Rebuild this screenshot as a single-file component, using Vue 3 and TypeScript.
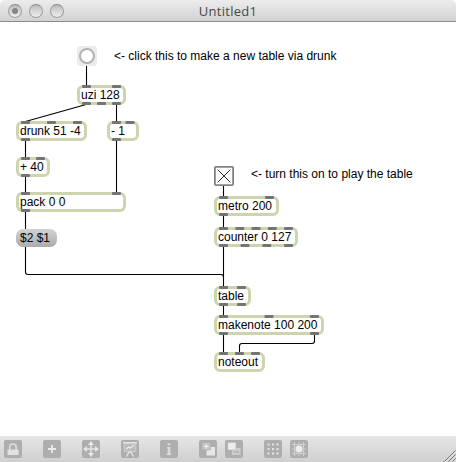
<script setup lang="ts">
interface PatchObject {
  id: string
  text: string
  x: number
  y: number
  w: number
  inlets: number[]
  outlets: number[]
}

// Port positions are offsets from the object's left edge.
const objects: PatchObject[] = [
  { id: 'uzi', text: 'uzi 128', x: 77, y: 85, w: 49, inlets: [5, 35], outlets: [5, 20, 35] },
  { id: 'drunk', text: 'drunk 51 -4', x: 16, y: 121, w: 71, inlets: [5, 31, 57], outlets: [5] },
  { id: 'minus', text: '- 1', x: 107, y: 121, w: 32, inlets: [5, 18.5], outlets: [5] },
  { id: 'plus', text: '+ 40', x: 16, y: 157, w: 34, inlets: [5, 20], outlets: [5] },
  { id: 'pack', text: 'pack 0 0', x: 16, y: 192, w: 110, inlets: [5, 96], outlets: [5] },
  { id: 'metro', text: 'metro 200', x: 214, y: 196, w: 65, inlets: [5, 51], outlets: [5] },
  { id: 'counter', text: 'counter 0 127', x: 214, y: 227, w: 84, inlets: [5, 21.3, 37.5, 53.8, 70], outlets: [5, 26.5, 48.3, 70] },
  { id: 'table', text: 'table', x: 214, y: 286, w: 37, inlets: [5, 23], outlets: [5, 23] },
  { id: 'makenote', text: 'makenote 100 200', x: 214, y: 315, w: 110, inlets: [5, 50.5, 96], outlets: [5, 96] },
  { id: 'noteout', text: 'noteout', x: 214, y: 352, w: 51, inlets: [5, 21, 37], outlets: [] },
]

const cords: string[] = [
  'M86.5 66V86',
  'M87 104.3L25.5 121.5',
  'M116.5 104V122',
  'M25.5 140V158',
  'M25.5 176V193',
  'M116.5 140V193',
  'M25.5 211V229',
  'M25.5 247V272Q25.5 274.5 28 274.5H221Q223.5 274.5 223.5 277',
  'M223.5 186V197',
  'M223.5 215V228',
  'M223.5 246V287',
  'M223.5 305V316',
  'M223.5 334V353',
  'M314.5 334V341Q314.5 343.5 312 343.5H242Q239.5 343.5 239.5 346V353',
]

const gridDots = [4.5, 9, 13.5]
const px = (n: number): string => `${n}px`
</script>

<template>
  <div class="window">
    <header class="titlebar">
      <div class="lights"><i class="light dirty"></i><i class="light"></i><i class="light"></i></div>
      <span class="title">Untitled1</span>
    </header>

    <main class="canvas">
      <div class="bang"><i></i></div>
      <div class="comment first">&lt;- click this to make a new table via drunk</div>
      <div class="comment second">&lt;- turn this on to play the table</div>
      <svg class="toggle" viewBox="0 0 20 20">
        <rect x=".9" y=".9" width="18.2" height="18.2" rx="1.2" fill="#fff" stroke="#828282" stroke-width="1.8" />
        <path d="M3.7 3.7L16.3 16.3M16.3 3.7L3.7 16.3" stroke="#111" stroke-width=".9" />
      </svg>
      <div
        v-for="o in objects"
        :key="o.id"
        class="object"
        :style="{ left: px(o.x), top: px(o.y - 22), width: px(o.w) }"
      >
        <span>{{ o.text }}</span>
      </div>
      <div class="message">$2 $1</div>
      <svg class="cords" viewBox="0 22 456 414">
        <path v-for="d in cords" :key="d" :d="d" fill="none" stroke="#000" stroke-width="1.1" />
        <g v-for="o in objects" :key="o.id" fill="#747474">
          <rect v-for="p in o.inlets" :key="'i' + p" :x="o.x + p" :y="o.y" width="9" height="3" rx="1" />
          <rect v-for="p in o.outlets" :key="'o' + p" :x="o.x + p" :y="o.y + 17" width="9" height="3" rx="1" />
        </g>
      </svg>
    </main>

    <footer class="toolbar">
      <svg class="tool" viewBox="0 0 18 18">
        <path d="M5.8 10V7.2a3.2 3.2 0 0 1 6.4 0V10" fill="none" stroke="#dedede" stroke-width="1.6" />
        <rect x="3.5" y="9.5" width="11" height="5.5" fill="#e2e2e2" />
      </svg>
      <svg class="tool" viewBox="0 0 18 18"><path d="M9 5V13M5 9H13" stroke="#ececec" stroke-width="1.8" /></svg>
      <svg class="tool" viewBox="0 0 18 18">
        <path d="M9 3V15M3 9H15" stroke="#e6e6e6" stroke-width="1.4" />
        <path d="M9 1L12 5H6ZM9 17L12 13H6ZM1 9L5 6V12ZM17 9L13 6V12Z" fill="#e8e8e8" />
      </svg>
      <svg class="tool" viewBox="0 0 18 18">
        <rect x="3" y="3" width="12" height="8.5" fill="#bcbcbc" />
        <path d="M2 2.8H16" stroke="#e6e6e6" stroke-width="1.4" />
        <path d="M3.2 3V11.6H14.8V3" fill="none" stroke="#cfcfcf" />
        <path d="M8 12L5.5 16.5M10 12L12.5 16.5M7.5 12.3H10.5" fill="none" stroke="#e6e6e6" stroke-width="1.3" />
        <path d="M5 9.3L7.5 7L9.5 8L13 4.8" fill="none" stroke="#eee" stroke-width="1.1" />
      </svg>
      <svg class="tool" viewBox="0 0 18 18">
        <path d="M7.7 3.2H10.3V5.3H7.7ZM7 7H10.3V13.6H11.3V15H6.7V13.6H7.7V8.3H7Z" fill="#dadada" />
      </svg>
      <svg class="tool" viewBox="0 0 18 18">
        <rect x="7.5" y="7" width="8.5" height="8.5" fill="#e6e6e6" />
        <rect x="3" y="2.5" width="8.5" height="7.5" fill="#c2c2c2" stroke="#b0b0b0" stroke-width=".6" />
        <path d="M7.3 3.8V8.8M4.8 6.3H9.8" stroke="#eee" stroke-width="1.3" />
      </svg>
      <svg class="tool near" viewBox="0 0 18 18">
        <rect x="7" y="8" width="8.5" height="7" fill="#cdcdcd" />
        <path d="M8.5 12H14" stroke="#aaa" stroke-width="1.2" />
        <rect x="2.8" y="2.5" width="8.2" height="7.5" fill="#ececec" stroke="#b4b4b4" stroke-width=".6" />
      </svg>
      <svg class="tool" viewBox="0 0 18 18">
        <template v-for="y in gridDots" :key="y">
          <rect v-for="x in gridDots" :key="x" :x="x - 1" :y="y - 1" width="2" height="2" fill="#e6e6e6" />
        </template>
      </svg>
      <svg class="tool near" viewBox="0 0 18 18">
        <path d="M4.5 2V16M9 2V16M13.5 2V16M2 4.5H16M2 9H16M2 13.5H16" stroke="#d0d0d0" stroke-width="1.1" />
        <circle cx="9" cy="9" r="4" fill="#eee" stroke="#bcbcbc" />
      </svg>
      <svg class="grip" viewBox="0 0 12 12">
        <path d="M.5 11.5L11.5 .5M4.5 11.5L11.5 4.5M8.5 11.5L11.5 8.5" stroke="#777" stroke-width="1" />
        <path d="M2 11.5L11.5 2M6 11.5L11.5 6M10 11.5L11.5 10" stroke="#f2f2f2" stroke-width=".7" />
      </svg>
    </footer>
  </div>
</template>

<style>
body {
  background: #fff;
  overflow: hidden;
}
</style>

<style scoped>
.window {
  width: 456px;
  height: 462px;
  display: flex;
  flex-direction: column;
  font: 12px/14px "Liberation Sans", Arial, sans-serif;
  color: #000;
}
.titlebar {
  box-sizing: border-box;
  height: 22px;
  display: grid;
  grid-template-columns: 1fr auto 1fr;
  align-items: center;
  border-bottom: 1px solid #8c8c8c;
  border-radius: 5px 5px 0 0;
  background: linear-gradient(#ececec, #d2d2d2);
}
.lights {
  display: flex;
  gap: 7px;
  padding-left: 8px;
}
.light {
  box-sizing: border-box;
  width: 14px;
  height: 14px;
  border: 1px solid #a0a0a0;
  border-top-color: #8c8c8c;
  border-radius: 50%;
  background: linear-gradient(#bcbcbc, #d4d4d4 45%, #ededed);
  display: grid;
  place-items: center;
}
.dirty::after {
  content: "";
  width: 6px;
  height: 6px;
  border-radius: 50%;
  background: #858585;
}
.title {
  font: 13px/20px "Open Sans", "Noto Sans", sans-serif;
  letter-spacing: 0.3px;
  color: #484848;
}
.canvas {
  position: relative;
  flex: 1;
  background: #fff;
}
.cords {
  position: absolute;
  inset: 0;
  width: 456px;
  height: 414px;
}
.bang {
  position: absolute;
  left: 77px;
  top: 24px;
  width: 20px;
  height: 20px;
  border-radius: 3px;
  background: #ebebeb;
  display: grid;
  place-items: center;
}
.bang i {
  box-sizing: border-box;
  width: 16px;
  height: 16px;
  border: 2px solid #b2b2b2;
  border-radius: 50%;
  background: #fff;
}
.toggle {
  position: absolute;
  left: 214px;
  top: 144px;
  width: 20px;
  height: 20px;
}
.comment {
  position: absolute;
  white-space: nowrap;
}
.first {
  left: 114px;
  top: 27px;
}
.second {
  left: 251px;
  top: 145px;
}
.object {
  position: absolute;
  box-sizing: border-box;
  height: 20px;
  border: 3px solid #ccd5ae;
  border-radius: 6px;
  background: #fff;
  padding-left: 1px;
  white-space: nowrap;
}
.message {
  position: absolute;
  box-sizing: border-box;
  left: 16px;
  top: 207px;
  width: 41px;
  height: 18px;
  border-radius: 7px;
  padding: 2px 4px;
  background: linear-gradient(#d3d3d3, #ababab);
}
.toolbar {
  height: 26px;
  display: flex;
  align-items: center;
  gap: 21px;
  padding-left: 4px;
  background: linear-gradient(#e6e6e6, #cfcfcf);
}
.tool {
  width: 18px;
  height: 18px;
  border-radius: 2px;
  background: #aeaeae;
}
.near {
  margin-left: -13px;
}
.grip {
  width: 12px;
  height: 12px;
  margin-left: auto;
  align-self: flex-end;
}
</style>
